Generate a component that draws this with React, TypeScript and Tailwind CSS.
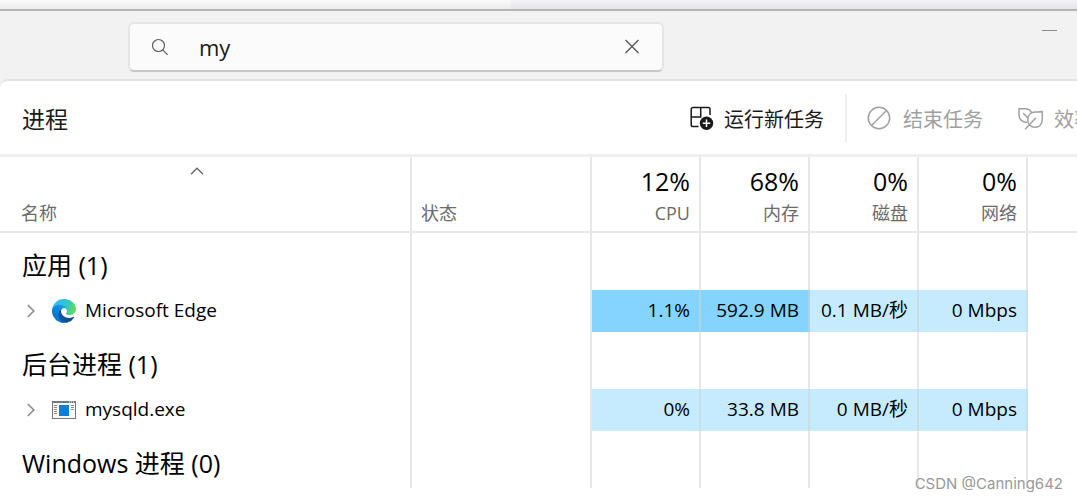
type Usage = { text: string; hot?: boolean };

type Process = { name: string; icon: "edge" | "exe"; usage: Usage[] };

type Group = { title: string; processes: Process[] };

const columns = [
  { total: "12%", label: "CPU" },
  { total: "68%", label: "内存" },
  { total: "0%", label: "磁盘" },
  { total: "0%", label: "网络" },
];

const groups: Group[] = [
  {
    title: "应用 (1)",
    processes: [
      {
        name: "Microsoft Edge",
        icon: "edge",
        usage: [
          { text: "1.1%", hot: true },
          { text: "592.9 MB", hot: true },
          { text: "0.1 MB/秒" },
          { text: "0 Mbps" },
        ],
      },
    ],
  },
  {
    title: "后台进程 (1)",
    processes: [
      {
        name: "mysqld.exe",
        icon: "exe",
        usage: [{ text: "0%" }, { text: "33.8 MB" }, { text: "0 MB/秒" }, { text: "0 Mbps" }],
      },
    ],
  },
  { title: "Windows 进程 (0)", processes: [] },
];

const line = "border-r-2 border-[#d0d0d080]";

const EdgeIcon = () => (
  <svg viewBox="0 0 256 256" className="size-6 shrink-0" aria-hidden="true">
    <defs>
      <linearGradient id="edge-dark" x1="63" y1="178" x2="241" y2="178" gradientUnits="userSpaceOnUse">
        <stop offset="0" stopColor="#0c59a4" />
        <stop offset="1" stopColor="#114a8b" />
      </linearGradient>
      <linearGradient id="edge-blue" x1="157" y1="100" x2="46" y2="221" gradientUnits="userSpaceOnUse">
        <stop offset="0" stopColor="#1b9de2" />
        <stop offset="0.16" stopColor="#1595df" />
        <stop offset="0.67" stopColor="#0680d7" />
        <stop offset="1" stopColor="#0078d4" />
      </linearGradient>
      <linearGradient id="edge-green" x1="20" y1="50" x2="250" y2="130" gradientUnits="userSpaceOnUse">
        <stop offset="0" stopColor="#35b5ee" />
        <stop offset="0.4" stopColor="#2fc2df" />
        <stop offset="0.6" stopColor="#35c8b8" />
        <stop offset="1" stopColor="#62dd5c" />
      </linearGradient>
    </defs>
    <g transform="translate(-4.63 -4.92)">
      <path
        fill="url(#edge-dark)"
        d="M235.68,195.46a93.73,93.73,0,0,1-10.54,4.71,101.87,101.87,0,0,1-35.9,6.46c-47.32,0-88.54-32.55-88.54-74.32A31.48,31.48,0,0,1,117.13,105c-42.8,1.8-53.8,46.4-53.8,72.53,0,73.88,68.09,81.37,82.76,81.37,7.91,0,19.84-2.3,27-4.56l1.31-.44A128.34,128.34,0,0,0,241,201.1,4,4,0,0,0,235.68,195.46Z"
      />
      <path
        fill="url(#edge-blue)"
        d="M110.34,246.34A79.2,79.2,0,0,1,87.6,225,80.72,80.72,0,0,1,117.13,105c3.12-1.47,8.45-4.13,15.54-4a32.35,32.35,0,0,1,25.69,13,31.88,31.88,0,0,1,6.36,18.66c0-.21,24.46-79.6-80-79.6-43.9,0-80,41.66-80,78.21a130.15,130.15,0,0,0,12.11,56,128,128,0,0,0,156.38,67.11,75.55,75.55,0,0,1-62.78-8Z"
      />
      <path
        fill="url(#edge-green)"
        d="M156.94,153.78c-.81,1.05-3.3,2.5-3.3,5.66,0,2.61,1.7,5.12,4.72,7.23,14.38,10,41.49,8.68,41.56,8.68a59.56,59.56,0,0,0,30.27-8.35A61.38,61.38,0,0,0,260.62,114.1c.26-22.41-8-37.31-11.34-43.91C228.09,28.76,182.35,5,132.61,5A128,128,0,0,0,4.62,131.2C5.1,94.66,41.42,65.15,84.62,65.15c3.5,0,23.46.34,42,10.07,16.34,8.58,24.9,18.94,30.85,29.21,6.18,10.67,7.28,24.15,7.28,29.52S162,147.28,156.94,153.78Z"
      />
    </g>
  </svg>
);

const ExeIcon = () => (
  <svg viewBox="0 0 24 18" className="h-[18px] w-6 shrink-0" aria-hidden="true">
    <rect width="24" height="18" fill="#74777b" />
    <rect x="1" y="2" width="22" height="15" fill="#fafafa" />
    <path d="M17 1h1M19 1h1M21 1h1" stroke="#fff" />
    <path
      d="M2 4.5h3M2 6.5h3M2 8.5h3M2 10.5h3M2 12.5h3M19 4.5h3M19 6.5h3M19 8.5h3"
      stroke="#8a8a8a"
    />
    <rect x="7" y="4" width="10" height="11" fill="#0c7fd6" />
  </svg>
);

const ChevronIcon = () => (
  <svg viewBox="0 0 8 14" className="h-3.5 w-2" fill="none" stroke="#8a8a8a" strokeWidth="1.6">
    <path d="M.8 1l6 6-6 6" />
  </svg>
);

const RunIcon = () => (
  <svg viewBox="0 0 24 24" className="size-6" fill="none" stroke="#1a1a1a" strokeWidth="1.5">
    <path d="M8.5 20.5H3A1.8 1.8 0 0 1 1.2 18.700V3.300A1.8 1.8 0 0 1 3 1.500h15.200a1.800 1.800 0 0 1 1.800 1.800V9" />
    <path d="M10.700 1.500V11H1.200" />
    <circle cx="16.500" cy="17.200" r="6.700" fill="#1a1a1a" stroke="none" />
    <path d="M16.500 13.500v7.400M12.800 17.200h7.400" stroke="#fff" />
  </svg>
);

const EndIcon = () => (
  <svg viewBox="0 0 24 24" className="size-6" fill="none" stroke="#a0a0a0" strokeWidth="1.5">
    <circle cx="12" cy="12" r="10.700" />
    <path d="M4.500 19.500l15-15" />
  </svg>
);

const LeafIcon = () => (
  <svg
    viewBox="0 0 26 24"
    className="h-6 w-[26px]"
    fill="none"
    stroke="#a0a0a0"
    strokeWidth="1.5"
    strokeLinecap="round"
    strokeLinejoin="round"
  >
    <path d="M8.500 16.300C4 16.200 1 13 1 9V2.800h6c3 0 5 1.200 6.300 3.400" />
    <path d="M5.500 7.500l4.500 4.500" />
    <path d="M24.300 5.500v7.500c0 5.500-3.300 8.300-7.300 8.300s-7.300-3-7.300-7.300c0-5 3.300-8 7.800-8 2.700 0 4.800.2 6.800-.5z" />
    <path d="M7.500 22.800l10-10.500" />
  </svg>
);

const SearchBar = () => (
  <div className="ml-32 flex h-[50px] w-full max-w-[536px] items-center rounded-md border-2 border-[#e5e5e5] border-b-[#c8c8c8] bg-[#fbfbfb] pr-[22px] pl-[21px]">
    <svg viewBox="0 0 18 18" className="size-[18px] shrink-0" fill="none" stroke="#5c5c5c" strokeWidth="1.2">
      <circle cx="7.500" cy="7.500" r="6" />
      <path d="M11.700 11.800l5 5" />
    </svg>
    <input
      type="text"
      aria-label="搜索"
      defaultValue="my"
      className="ml-[30px] min-w-0 flex-1 bg-transparent text-[22px] leading-8 text-[#1a1a1a] outline-none"
    />
    <button type="button" aria-label="清除">
      <svg viewBox="0 0 16 16" className="size-4" fill="none" stroke="#555" strokeWidth="1.3">
        <path d="M1.500 1l13 13M14.500 1l-13 13" />
      </svg>
    </button>
  </div>
);

const Toolbar = () => (
  <div className="flex h-[73px] items-center overflow-hidden text-xl whitespace-nowrap">
    <h1 className="w-[690px] shrink-0 pt-1 pl-[22px] text-[23px] text-[#1a1a1a]">进程</h1>
    <button type="button" className="flex shrink-0 items-center gap-2.5 text-[#1a1a1a]">
      <RunIcon />
      <span className="pt-1">运行新任务</span>
    </button>
    <div className="ml-[21px] h-12 w-0.5 shrink-0 bg-[#efefef]" />
    <button type="button" disabled className="ml-5 flex shrink-0 items-center gap-3 text-[#a0a0a0]">
      <EndIcon />
      <span className="pt-1">结束任务</span>
    </button>
    <button type="button" disabled className="ml-[35px] flex shrink-0 items-center gap-2.5 text-[#a0a0a0]">
      <LeafIcon />
      <span className="pt-1">效率模式</span>
    </button>
  </div>
);

const ProcessRow = ({ process }: { process: Process }) => (
  <tr className="h-[42px] text-[19px] leading-6 text-black">
    <td className={line}>
      <div className="flex items-center pl-[27px]">
        <button type="button" aria-label="展开">
          <ChevronIcon />
        </button>
        <span className="ml-[17px] flex items-center gap-[9px]">
          {process.icon === "edge" ? <EdgeIcon /> : <ExeIcon />}
          <span className="pb-0.5">{process.name}</span>
        </span>
      </div>
    </td>
    <td className={line} />
    {process.usage.map((item, i) => (
      <td
        key={i}
        className={`${line} pr-[9px] pb-0.5 text-right whitespace-nowrap ${item.hot ? "bg-[#84d4ff]" : "bg-[#c6ebff]"}`}
      >
        {item.text}
      </td>
    ))}
    <td />
  </tr>
);

const GroupRows = ({ group }: { group: Group }) => (
  <>
    <tr className="h-[57px]">
      <th
        scope="rowgroup"
        className={`${line} pt-1.5 pl-[22px] text-left text-[25px] leading-8 font-normal text-black`}
      >
        {group.title}
      </th>
      <td className={line} />
      {columns.map((column) => (
        <td key={column.label} className={line} />
      ))}
      <td />
    </tr>
    {group.processes.map((process) => (
      <ProcessRow key={process.name} process={process} />
    ))}
  </>
);

const ProcessTable = () => (
  <table className="w-full table-fixed border-separate border-spacing-0">
    <colgroup>
      <col className="w-[412px]" />
      <col className="w-[180px]" />
      {columns.map((column) => (
        <col key={column.label} className="w-[109px]" />
      ))}
      <col />
    </colgroup>
    <thead>
      <tr className="h-[76px] text-left align-bottom text-lg leading-6 text-[#6b6b6b]">
        <th className={`${line} border-b-2 pr-[38px] pb-1.5 pl-[21px] font-normal`}>
          <div className="flex flex-col gap-[26px]">
            <svg viewBox="0 0 14 8" className="h-2 w-3.5 self-center" fill="none" stroke="#666" strokeWidth="1.3">
              <path d="M1 7.200l6-6 6 6" />
            </svg>
            名称
          </div>
        </th>
        <th className={`${line} border-b-2 pb-1.5 pl-[9px] font-normal`}>状态</th>
        {columns.map((column) => (
          <th key={column.label} className={`${line} border-b-2 pr-[9px] pb-1.5 text-right font-normal`}>
            <div className="pb-1 text-[25px] leading-8 text-black">{column.total}</div>
            {column.label}
          </th>
        ))}
        <td className="border-b-2 border-[#d0d0d080]" />
      </tr>
    </thead>
    <tbody>
      {groups.map((group) => (
        <GroupRows key={group.title} group={group} />
      ))}
    </tbody>
  </table>
);

export default function App() {
  return (
    <div className="relative min-h-screen overflow-hidden bg-white font-['Open_Sans','Noto_Sans_CJK_SC',sans-serif]">
      <div className="flex h-[11px] border-b-2 border-[#b5b5b5]">
        <div className="w-[511px] bg-linear-to-b from-[#fafafa] to-[#ececec]" />
        <div className="flex-1 bg-linear-to-b from-[#f3f3f6] to-[#e6e6e9]" />
      </div>
      <div className="bg-[#f2f2f2]">
        <header className="flex items-start justify-between pt-[11px] pr-5 pb-[7px]">
          <SearchBar />
          <button type="button" aria-label="最小化" className="pt-2">
            <span className="block h-px w-[15px] bg-[#8c8c8c]" />
          </button>
        </header>
        <main className="rounded-tl-lg border-t-2 border-[#e4e4e4] bg-white">
          <Toolbar />
          <div className="h-[3px] bg-[#f0f0f0]" />
          <ProcessTable />
        </main>
      </div>
      <div className="absolute top-[474px] right-3.5 font-['Inter',sans-serif] text-[15px] leading-5 text-[#999]">
        CSDN @Canning642
      </div>
    </div>
  );
}
